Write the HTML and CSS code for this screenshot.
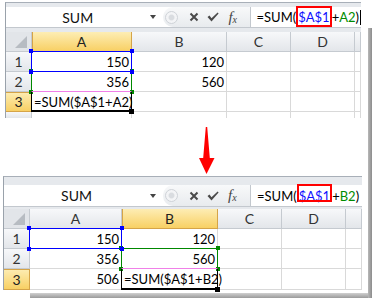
FILE: index.html
```html
<!DOCTYPE html>
<html lang="en">
<head>
  <meta charset="UTF-8">
  <title>Absolute reference in a formula</title>
  <link rel="stylesheet" href="styles.css">
</head>
<body>
<div class="page">

  <!-- Before: formula typed in A3 -->
  <div class="upper">
    <div class="upper-frame">
      <div class="sheet sheet-top">
        <div class="band"></div>
        <div class="fbar">
          <div class="namebox"><span class="name">SUM</span><span class="drop"></span></div>
          <div class="tools">
            <span class="grip"></span>
            <svg class="tool-x" width="10" height="10" viewBox="0 0 10 10"><path d="M1.5 1.5 L8.5 8.5 M8.5 1.5 L1.5 8.5" stroke="#4a4a4a" stroke-width="2" fill="none"/></svg>
            <svg class="tool-ok" width="12" height="10" viewBox="0 0 12 10"><polygon points="0.5,5 2.5,3.6 4.5,6.2 10.6,0.4 11.6,1.5 4.5,9.6" fill="#4a4a4a"/></svg>
            <span class="fx"><i>f</i><sub>x</sub></span>
          </div>
          <div class="input">=SUM(<span class="boxed">$A$1</span>+<span class="g">A2</span>)<span class="caret"></span></div>
        </div>
        <div class="band low"></div>
        <div class="grid">
          <div class="cell hd corner"><span class="tri"></span></div>
          <div class="cell hd on on-col">A</div>
          <div class="cell hd">B</div>
          <div class="cell hd">C</div>
          <div class="cell hd">D</div>
          <div class="cell hd"></div>

          <div class="cell hd">1</div>
          <div class="cell">150<span class="ref blue"></span></div>
          <div class="cell">120</div>
          <div class="cell"></div>
          <div class="cell"></div>
          <div class="cell"></div>

          <div class="cell hd">2</div>
          <div class="cell">356<span class="ref green"></span></div>
          <div class="cell">560</div>
          <div class="cell"></div>
          <div class="cell"></div>
          <div class="cell"></div>

          <div class="cell hd on on-row">3</div>
          <div class="cell left">=SUM($A$1+A2)<span class="ref active"></span></div>
          <div class="cell"></div>
          <div class="cell"></div>
          <div class="cell"></div>
          <div class="cell"></div>

          <div class="cell hd last"></div>
          <div class="cell last"></div>
          <div class="cell last"></div>
          <div class="cell last"></div>
          <div class="cell last"></div>
          <div class="cell last"></div>
        </div>
      </div>
      <div class="arrow-row">
        <svg width="16" height="47" viewBox="0 0 16 47"><polygon points="6.8,0 8.2,0 10.8,31 15.5,31 7.5,47 0,31 4.2,31" fill="#ff0000"/></svg>
      </div>
    </div>
    <div class="shade-right"></div>
  </div>

  <!-- After: formula copied to B3 -->
  <div class="lower">
    <div class="sheet sheet-bot">
      <div class="band"></div>
      <div class="fbar">
        <div class="namebox"><span class="name">SUM</span><span class="drop"></span></div>
        <div class="tools">
          <span class="grip"></span>
          <svg class="tool-x" width="10" height="10" viewBox="0 0 10 10"><path d="M1.5 1.5 L8.5 8.5 M8.5 1.5 L1.5 8.5" stroke="#4a4a4a" stroke-width="2" fill="none"/></svg>
          <svg class="tool-ok" width="12" height="10" viewBox="0 0 12 10"><polygon points="0.5,5 2.5,3.6 4.5,6.2 10.6,0.4 11.6,1.5 4.5,9.6" fill="#4a4a4a"/></svg>
          <span class="fx"><i>f</i><sub>x</sub></span>
        </div>
        <div class="input">=SUM(<span class="boxed">$A$1</span>+<span class="g">B2</span>)</div>
      </div>
      <div class="band low"></div>
      <div class="grid">
        <div class="cell hd corner"><span class="tri"></span></div>
        <div class="cell hd">A</div>
        <div class="cell hd on on-col">B</div>
        <div class="cell hd">C</div>
        <div class="cell hd">D</div>
        <div class="cell hd"></div>

        <div class="cell hd">1</div>
        <div class="cell">150<span class="ref blue"></span></div>
        <div class="cell">120</div>
        <div class="cell"></div>
        <div class="cell"></div>
        <div class="cell"></div>

        <div class="cell hd">2</div>
        <div class="cell">356</div>
        <div class="cell">560<span class="ref green"></span></div>
        <div class="cell"></div>
        <div class="cell"></div>
        <div class="cell"></div>

        <div class="cell hd on on-row">3</div>
        <div class="cell">506</div>
        <div class="cell left">=SUM($A$1+B2)<span class="ref active"></span></div>
        <div class="cell"></div>
        <div class="cell"></div>
        <div class="cell"></div>
      </div>
    </div>
    <div class="shade-right"></div>
    <div class="shade-bottom"></div>
  </div>

</div>
</body>
</html>
```

FILE: styles.css
```css
body {
  margin: 0;
  background: #ffffff;
  font-family: Lato, "Liberation Sans", Arial, sans-serif;
  font-size: 13px;
  color: #000000;
}

.page {
  width: 372px;
  height: 298px;
  overflow: hidden;
}

/* frames and drop shadows */
.upper {
  display: flex;
  height: 176px;
}

.upper-frame {
  width: 368px;
  padding-left: 5px;
  box-sizing: border-box;
}

.shade-right {
  width: 4px;
  background: linear-gradient(to right, #b8b8b8, #8c8c8c);
}

.upper .shade-right {
  margin-top: 28px;
}

.lower {
  display: grid;
  grid-template-columns: 368px 4px;
  grid-template-rows: 117px 5px;
}

.lower .shade-right {
  grid-column: 2;
  grid-row: 1 / 3;
}

.shade-bottom {
  grid-column: 1;
  grid-row: 2;
  margin-left: 30px;
  background: linear-gradient(#d0d0d0, #9a9a9a);
}

.arrow-row {
  padding: 9px 0 0 194px;
  line-height: 0;
}

/* sheet */
.sheet {
  border-top: 1px solid #a8afb8;
  border-left: 1px solid #9aa2ab;
  box-sizing: border-box;
  background: #ffffff;
}

.sheet-top {
  margin-top: 2px;
  width: 356px;
}

.sheet-bot {
  margin-left: 3px;
  width: 359px;
  grid-column: 1;
  grid-row: 1;
  align-self: start;
}

.band {
  height: 4px;
  background: #e6e9ed;
}

.sheet-bot .band {
  height: 8px;
}

.sheet-bot .band.low {
  height: 2px;
}

/* formula bar */
.fbar {
  display: flex;
  height: 20px;
  border-bottom: 1px solid #c3c8ce;
}

.sheet-bot .fbar {
  height: 21px;
}

.namebox {
  width: 159px;
  display: flex;
  align-items: center;
  background: #ffffff;
}

.name {
  flex: 1;
  text-align: center;
  font-size: 14px;
  color: #111111;
}

.drop {
  width: 0;
  height: 0;
  border-left: 3.5px solid transparent;
  border-right: 3.5px solid transparent;
  border-top: 4px solid #444444;
  margin: 0 7px 0 1px;
}

.tools {
  width: 88px;
  display: flex;
  align-items: center;
  background: linear-gradient(#f8f9fa, #e8ebee);
  border-radius: 10px 0 0 10px;
  border-right: 1px solid #c3c8ce;
  box-sizing: border-box;
}

.grip {
  width: 13px;
  height: 13px;
  margin-left: 2px;
  border-radius: 50%;
  border: 1px solid #cfd3d8;
  box-sizing: border-box;
  background: radial-gradient(circle, #d9dce0 0, #d9dce0 30%, #f3f4f6 45%);
}

.tool-x {
  margin-left: 11px;
}

.tool-ok {
  margin-left: 8px;
}

.fx {
  margin-left: 9px;
  font-family: "Liberation Serif", serif;
  font-size: 15px;
  color: #444444;
  line-height: 1;
}

.fx sub {
  font-size: 10px;
  font-style: italic;
  vertical-align: -1px;
}

.input {
  flex: 1;
  display: flex;
  align-items: center;
  padding-left: 6px;
  background: #ffffff;
  white-space: nowrap;
  line-height: 16px;
}

/* red frame the tutorial draws round the absolute reference */
.boxed {
  position: relative;
  padding: 0 2px;
  color: #1010ff;
}

.boxed::before {
  content: "";
  position: absolute;
  left: 0;
  right: 0;
  top: -3px;
  bottom: -2px;
  border: 2px solid #ff0000;
  z-index: 1;
}

.sheet-bot .boxed::before {
  top: -4px;
  bottom: 2px;
}

.g {
  color: #008c00;
}

.caret {
  width: 1px;
  height: 15px;
  margin-left: 1px;
  background: #000000;
}

/* grid */
.grid {
  display: grid;
}

.sheet-top .grid {
  grid-template-columns: 26px 100px 95px 64px 64px 6px;
  grid-template-rows: 20px 20px 20px 20px 6px;
}

.sheet-bot .grid {
  grid-template-columns: 26px 92px 96px 64px 64px 16px;
  grid-template-rows: 20px 20px 20px 21px;
}

.cell {
  position: relative;
  display: flex;
  align-items: center;
  justify-content: flex-end;
  padding-right: 2px;
  border-right: 1px solid #d9d9d9;
  border-bottom: 1px solid #d9d9d9;
  box-sizing: border-box;
  white-space: nowrap;
}

.cell.left {
  justify-content: flex-start;
  padding: 0 0 0 2px;
}

.cell.last {
  border-bottom: none;
}

.hd {
  justify-content: center;
  padding: 0;
  background: linear-gradient(#f7f8fa, #e3e6ea);
  border-color: #c5cad0;
  color: #333333;
  font-size: 14px;
}

.hd.on {
  background: linear-gradient(#fdedb4, #f8d064);
  border-color: #d5a448;
  color: #222222;
}

.hd.on-col {
  box-shadow: inset 1px 0 0 #d5a448;
}

.hd.on-row {
  box-shadow: inset 0 1px 0 #d5a448;
}

.corner {
  justify-content: flex-end;
  align-items: flex-end;
  background: #e2e5e9;
}

.tri {
  width: 0;
  height: 0;
  border-left: 12px solid transparent;
  border-bottom: 12px solid #b7bcc2;
  margin: 0 4px 3px 0;
}

/* reference outlines drawn while editing */
.ref {
  position: absolute;
  top: -1px;
  left: -1px;
  right: -1px;
  bottom: -1px;
  border: 1px solid currentColor;
  z-index: 1;
}

.ref::before,
.ref::after {
  content: "";
  position: absolute;
  left: -3px;
  right: -3px;
  height: 4px;
  background:
    linear-gradient(currentColor, currentColor) left / 4px 4px no-repeat,
    linear-gradient(currentColor, currentColor) right / 4px 4px no-repeat;
}

.ref::before {
  top: -3px;
}

.ref::after {
  bottom: -3px;
}

.ref.blue {
  color: #0000ff;
  z-index: 2;
}

.ref.green {
  color: #008800;
}

.ref.active {
  border-color: #000000;
  border-top-color: #f080e8;
  border-bottom-width: 2px;
  z-index: 3;
}

.ref.active::before {
  display: none;
}

.ref.active::after {
  left: auto;
  right: -3px;
  bottom: -4px;
  width: 5px;
  height: 5px;
  background: #000000;
}
```
